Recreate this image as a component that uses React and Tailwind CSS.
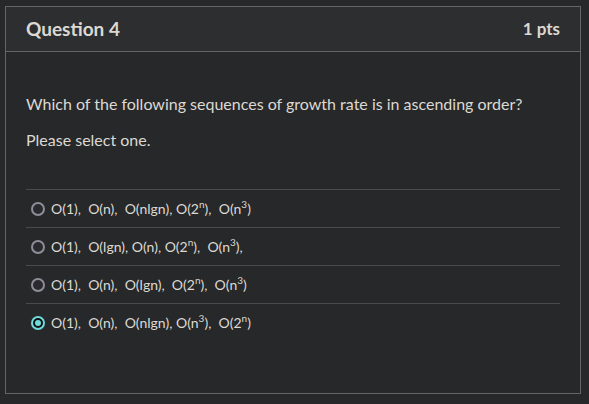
import React from "react";

const answers = [
  { id: "a", parts: ["O(1),  O(n),  O(nlgn), O(2", "n", "),  O(n", "3", ")"] },
  { id: "b", parts: ["O(1),  O(lgn), O(n), O(2", "n", "),  O(n", "3", "),"] },
  { id: "c", parts: ["O(1),  O(n),  O(lgn),  O(2", "n", "),  O(n", "3", ")"] },
  { id: "d", parts: ["O(1),  O(n),  O(nlgn), O(n", "3", "),  O(2", "n", ")"] },
];

const Radio = ({ checked }) =>
  checked ? (
    <span className="w-[14px] h-[14px] rounded-full bg-[#6fdcdc] flex items-center justify-center shrink-0">
      <span className="w-[10px] h-[10px] rounded-full bg-[#111] flex items-center justify-center">
        <span className="w-[6px] h-[6px] rounded-full bg-[#6fdcdc]" />
      </span>
    </span>
  ) : (
    <span className="w-[14px] h-[14px] rounded-full border-2 border-[#8e8d99] bg-[#2a2a2e] shrink-0" />
  );

const Answer = ({ parts, checked }) => (
  <label className="flex items-center gap-[6px] h-[38px] border-t border-[#4a4b4d] pl-[5px]">
    <Radio checked={checked} />
    <span className="text-[14px] text-[#dcd9d2] whitespace-pre">
      {parts.map((p, i) =>
        i % 2 === 1 ? (
          <span key={i} className="text-[10px] relative -top-[6px]">{p}</span>
        ) : (
          <span key={i}>{p}</span>
        )
      )}
    </span>
  </label>
);

export default function App() {
  return (
    <div
      className="w-[589px] h-[404px] bg-[#27282a] pt-[6px] pl-[5px]"
      style={{ fontFamily: "Lato, 'Open Sans', sans-serif" }}
    >
      <div className="w-[576px] h-[388px] border border-[#646566] flex flex-col">
        <div className="h-[45px] bg-[#2d2e30] border-b border-[#646566] flex items-center justify-between px-[20px]">
          <span className="text-[19px] font-bold text-[#dcd9d2]">Question 4</span>
          <span className="text-[17px] font-bold text-[#dcd9d2]">1 pts</span>
        </div>
        <div className="px-[20px] pt-[42px]">
          <p className="text-[16px] text-[#dcd9d2] leading-[20px]">
            Which of the following sequences of growth rate is in ascending order?
          </p>
          <p className="text-[16px] text-[#dcd9d2] leading-[20px] mt-[16px]">Please select one.</p>
          <div className="mt-[39px]">
            {answers.map((a, i) => (
              <Answer key={a.id} parts={a.parts} checked={i === 3} />
            ))}
          </div>
        </div>
      </div>
    </div>
  );
}
